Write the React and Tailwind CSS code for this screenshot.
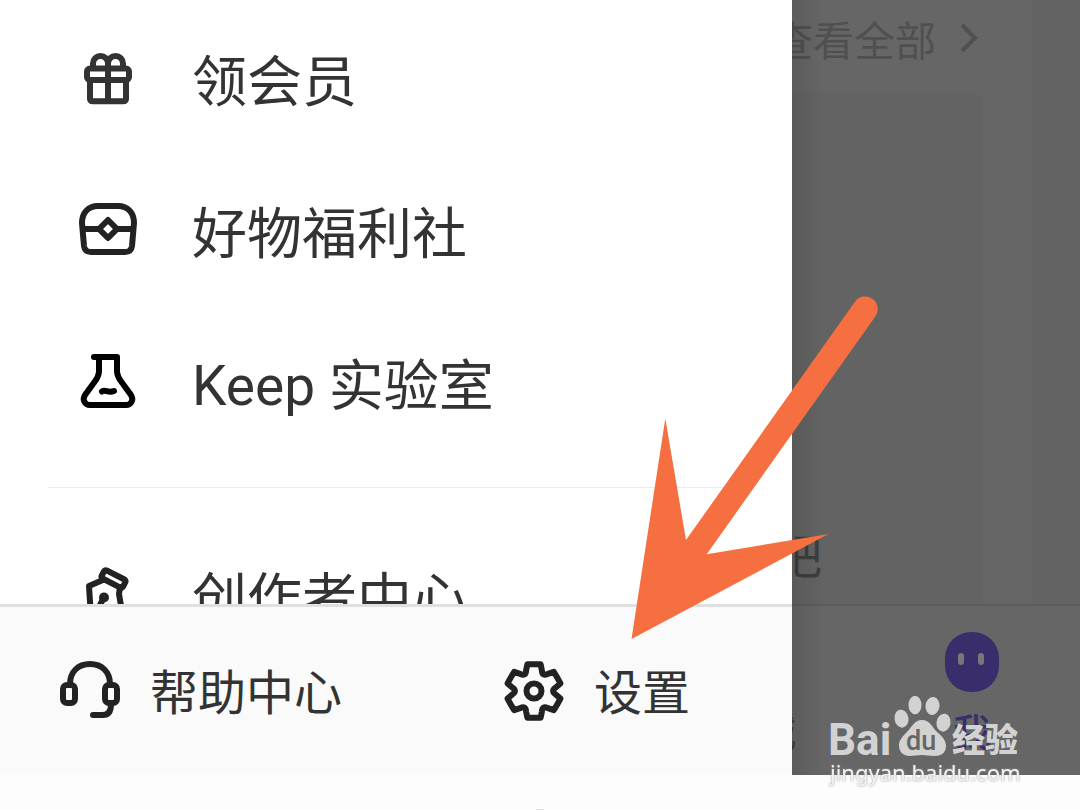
import clsx from "clsx";

const Icon = ({ children, className }) => (
  <svg
    viewBox="0 0 60 60"
    className={clsx("w-[60px] h-[60px] shrink-0", className)}
    fill="none"
    stroke="currentColor"
    strokeWidth="6"
    strokeLinecap="round"
    strokeLinejoin="round"
    aria-hidden="true"
  >
    {children}
  </svg>
);

const GiftIcon = () => (
  <Icon className="text-[#333333]">
    <rect x="9" y="18.5" width="42" height="11.5" rx="3" />
    <path d="M12 31V48.5Q12 51.3 15 51.3H45Q48 51.3 48 48.5V31M30 14V51" />
    <path d="M15 18V13.5A7.5 7.5 0 0 1 30 13.5A7.5 7.5 0 0 1 45 13.5V18" />
  </Icon>
);

const ChestIcon = () => (
  <Icon className="text-[#222222]">
    <path d="M4 21C4 11 10 4 20 4H40C50 4 56 11 56 21L54 44C53.500 48 51 50 47 50H13C9 50 6.500 48 6 44Z" />
    <path d="M30 18L39 27L30 36L21 27ZM5 27H20M40 27H55" />
  </Icon>
);

const FlaskIcon = () => (
  <Icon className="text-black">
    <path d="M16 3H39V17C39 23 42 26 45 30L53 41C56 46 53 51 48 51H12C7 51 4 46 7 41L15 30C18 26 21 23 21 17V4" />
    <path d="M24 37.500C27 35 30 39.500 36 37" />
  </Icon>
);

const PenIcon = () => (
  <Icon className="text-[#222222]">
    <rect x="23.500" y="7.500" width="24" height="9" rx="2" transform="rotate(27 35.5 12)" />
    <path d="M13 50L11 19L26 12.500M42 20L41 27L45 50" />
    <circle cx="26" cy="30.500" r="2" />
    <path d="M25 32L20 42" />
  </Icon>
);

const HeadsetIcon = () => (
  <Icon className="text-[#222222]">
    <rect x="3" y="24" width="12" height="18" rx="4" />
    <rect x="45" y="24" width="12" height="18" rx="4" />
    <path d="M10 23C10 11 18 3 30 3S50 11 50 23M51 43Q51 54 43 54H33" />
  </Icon>
);

const polar = (deg, r) => {
  const a = ((deg - 90) * Math.PI) / 180;
  return `${(30 + r * Math.cos(a)).toFixed(2)} ${(30 + r * Math.sin(a)).toFixed(2)}`;
};

const gearPath =
  [0, 60, 120, 180, 240, 300]
    .map(
      (t, i) =>
        `${i ? "L" : "M"}${polar(t - 14, 27.5)}Q${polar(t, 27)} ${polar(t + 14, 27.5)}L${polar(t + 21, 22)}Q${polar(t + 30, 16.5)} ${polar(t + 39, 22)}`
    )
    .join("") + "Z";

const GearIcon = () => (
  <Icon className="text-[#222222]">
    <path d={gearPath} />
    <circle cx="30" cy="30" r="7.500" />
  </Icon>
);

const MenuItem = ({ icon, label }) => (
  <li>
    <a href="#" className="flex items-center gap-[54px] h-[152px] pl-[78px]">
      {icon}
      <span className="pt-1 text-[55px] leading-[64px] whitespace-nowrap">{label}</span>
    </a>
  </li>
);

const Drawer = () => (
  <aside className="w-[792px] shrink-0 flex flex-col bg-white text-[#333333]">
    <nav className="flex-1 min-h-0 overflow-hidden pt-1">
      <ul>
        <MenuItem icon={<GiftIcon />} label="领会员" />
        <MenuItem icon={<ChestIcon />} label="好物福利社" />
        <MenuItem icon={<FlaskIcon />} label="Keep 实验室" />
      </ul>
      <hr className="mx-12 mt-[27px] mb-[33px] border-0 h-px bg-[#ececec]" />
      <ul>
        <MenuItem icon={<PenIcon />} label="创作者中心" />
      </ul>
    </nav>
    <div className="h-[171px] shrink-0 flex items-center bg-[#fafafa] border-t-[3px] border-[#e0e0e0] text-[48px] leading-[56px]">
      <button className="flex items-center gap-[30px] w-[445px] pl-[60px] whitespace-nowrap">
        <HeadsetIcon />
        <span className="pt-1.5">帮助中心</span>
      </button>
      <button className="flex items-center gap-[30px] pl-[59px] whitespace-nowrap">
        <GearIcon />
        <span className="pt-1.5">设置</span>
      </button>
    </div>
  </aside>
);

const Backdrop = () => (
  <main className="relative flex-1 min-w-0 overflow-hidden flex flex-col bg-[#666666]">
    <div className="flex-1 min-h-0 flex">
      <div className="flex-1 min-w-0 flex flex-col">
        <div className="h-[93px] shrink-0 flex items-start justify-end gap-[24px] pr-[54px] pt-[18px] text-[#505050]">
          <a href="#" className="text-[41px] leading-[48px] whitespace-nowrap">
            查看全部
          </a>
          <svg viewBox="0 0 18 30" className="w-[18px] h-[30px] mt-[5px] shrink-0" aria-hidden="true">
            <path d="M2 2L15 15L2 28" fill="none" stroke="currentColor" strokeWidth="4" />
          </svg>
        </div>
        <div className="flex-1 flex items-end mr-[49px] pb-[18px] bg-[#636363] rounded-tr-xl text-[#3d3d3d]">
          <p className="-ml-[18px] text-[48px] leading-[56px]">吧</p>
        </div>
      </div>
      <div className="w-12 bg-[#636363]" />
    </div>
    <nav className="h-[171px] shrink-0 flex justify-between border-t-2 border-[#5c5c5c] pr-[81px] pt-[26px] text-[38px] leading-[40px]">
      <a href="#" className="-ml-[34px] pt-[81px] text-[#3d3d3d]">
        城
      </a>
      <a href="#" className="flex flex-col items-center gap-[21px] text-[#3a2d6b] font-medium">
        <svg viewBox="0 0 54 60" className="w-[54px] h-[60px]" aria-hidden="true">
          <rect width="54" height="60" rx="26" fill="currentColor" />
          <rect x="13" y="21" width="6" height="12" rx="3" fill="#777777" />
          <rect x="33" y="21" width="6" height="12" rx="3" fill="#777777" />
        </svg>
        <span>我</span>
      </a>
    </nav>
    <div className="absolute inset-y-0 left-0 w-8 bg-gradient-to-r from-black/10 to-transparent" />
  </main>
);

const Arrow = () => (
  <svg
    viewBox="0 0 250 346"
    className="absolute left-[630px] top-[294px] w-[250px] h-[346px] pointer-events-none"
    aria-hidden="true"
  >
    <path
      fill="#f66f40"
      d="M1.500 345L35.300 124.500L56 246L225.500 7A12.600 12.600 0 0 1 246 21.500L76.700 260.300L198.500 240Z"
    />
  </svg>
);

const Watermark = () => (
  <svg
    viewBox="0 0 200 96"
    className="absolute right-[54px] bottom-[20px] w-[200px] h-[96px] pointer-events-none"
  >
    <g fill="#d2d2d2">
      <text x="2" y="61" className="text-[44px] font-bold">
        Bai
      </text>
      <ellipse cx="75.500" cy="24.700" rx="7" ry="9" transform="rotate(-10 75.5 24.7)" />
      <ellipse cx="89" cy="11" rx="6.500" ry="9.300" />
      <ellipse cx="106.500" cy="12" rx="7" ry="9" transform="rotate(8 106.5 12)" />
      <ellipse cx="117.500" cy="28.700" rx="7" ry="9" transform="rotate(10 117.5 28.7)" />
      <path d="M96 26C104 26 106 33 111 38C117 43 120 47 120 52C120 59 115 62 108 62C103 62 100 61 96 61S88 62 84 62C77 62 73 58 73 51C73 46 77 42 81 38C86 33 88 26 96 26Z" />
      <text x="126" y="58" className="text-[33px] font-black">
        经验
      </text>
    </g>
    <text x="80" y="56" fill="#666666" className="text-[27px] font-medium">
      du
    </text>
    <text
      x="4"
      y="87"
      fill="#f2f2f2"
      className="text-[22px] font-['Noto_Sans'] drop-shadow-[0_0_1px_#999999]"
    >
      jingyan.baidu.com
    </text>
  </svg>
);

const App = () => {
  return (
    <div className="relative h-screen overflow-hidden flex flex-col bg-[#fdfdfd] font-[Roboto,'Noto_Sans_CJK_SC',sans-serif]">
      <div className="flex-1 min-h-0 flex">
        <Drawer />
        <Backdrop />
      </div>
      <footer className="h-[35px] shrink-0 flex items-end justify-center">
        <div className="w-2 h-px bg-[#dddddd]" />
      </footer>
      <Arrow />
      <Watermark />
    </div>
  );
};

export default App;
